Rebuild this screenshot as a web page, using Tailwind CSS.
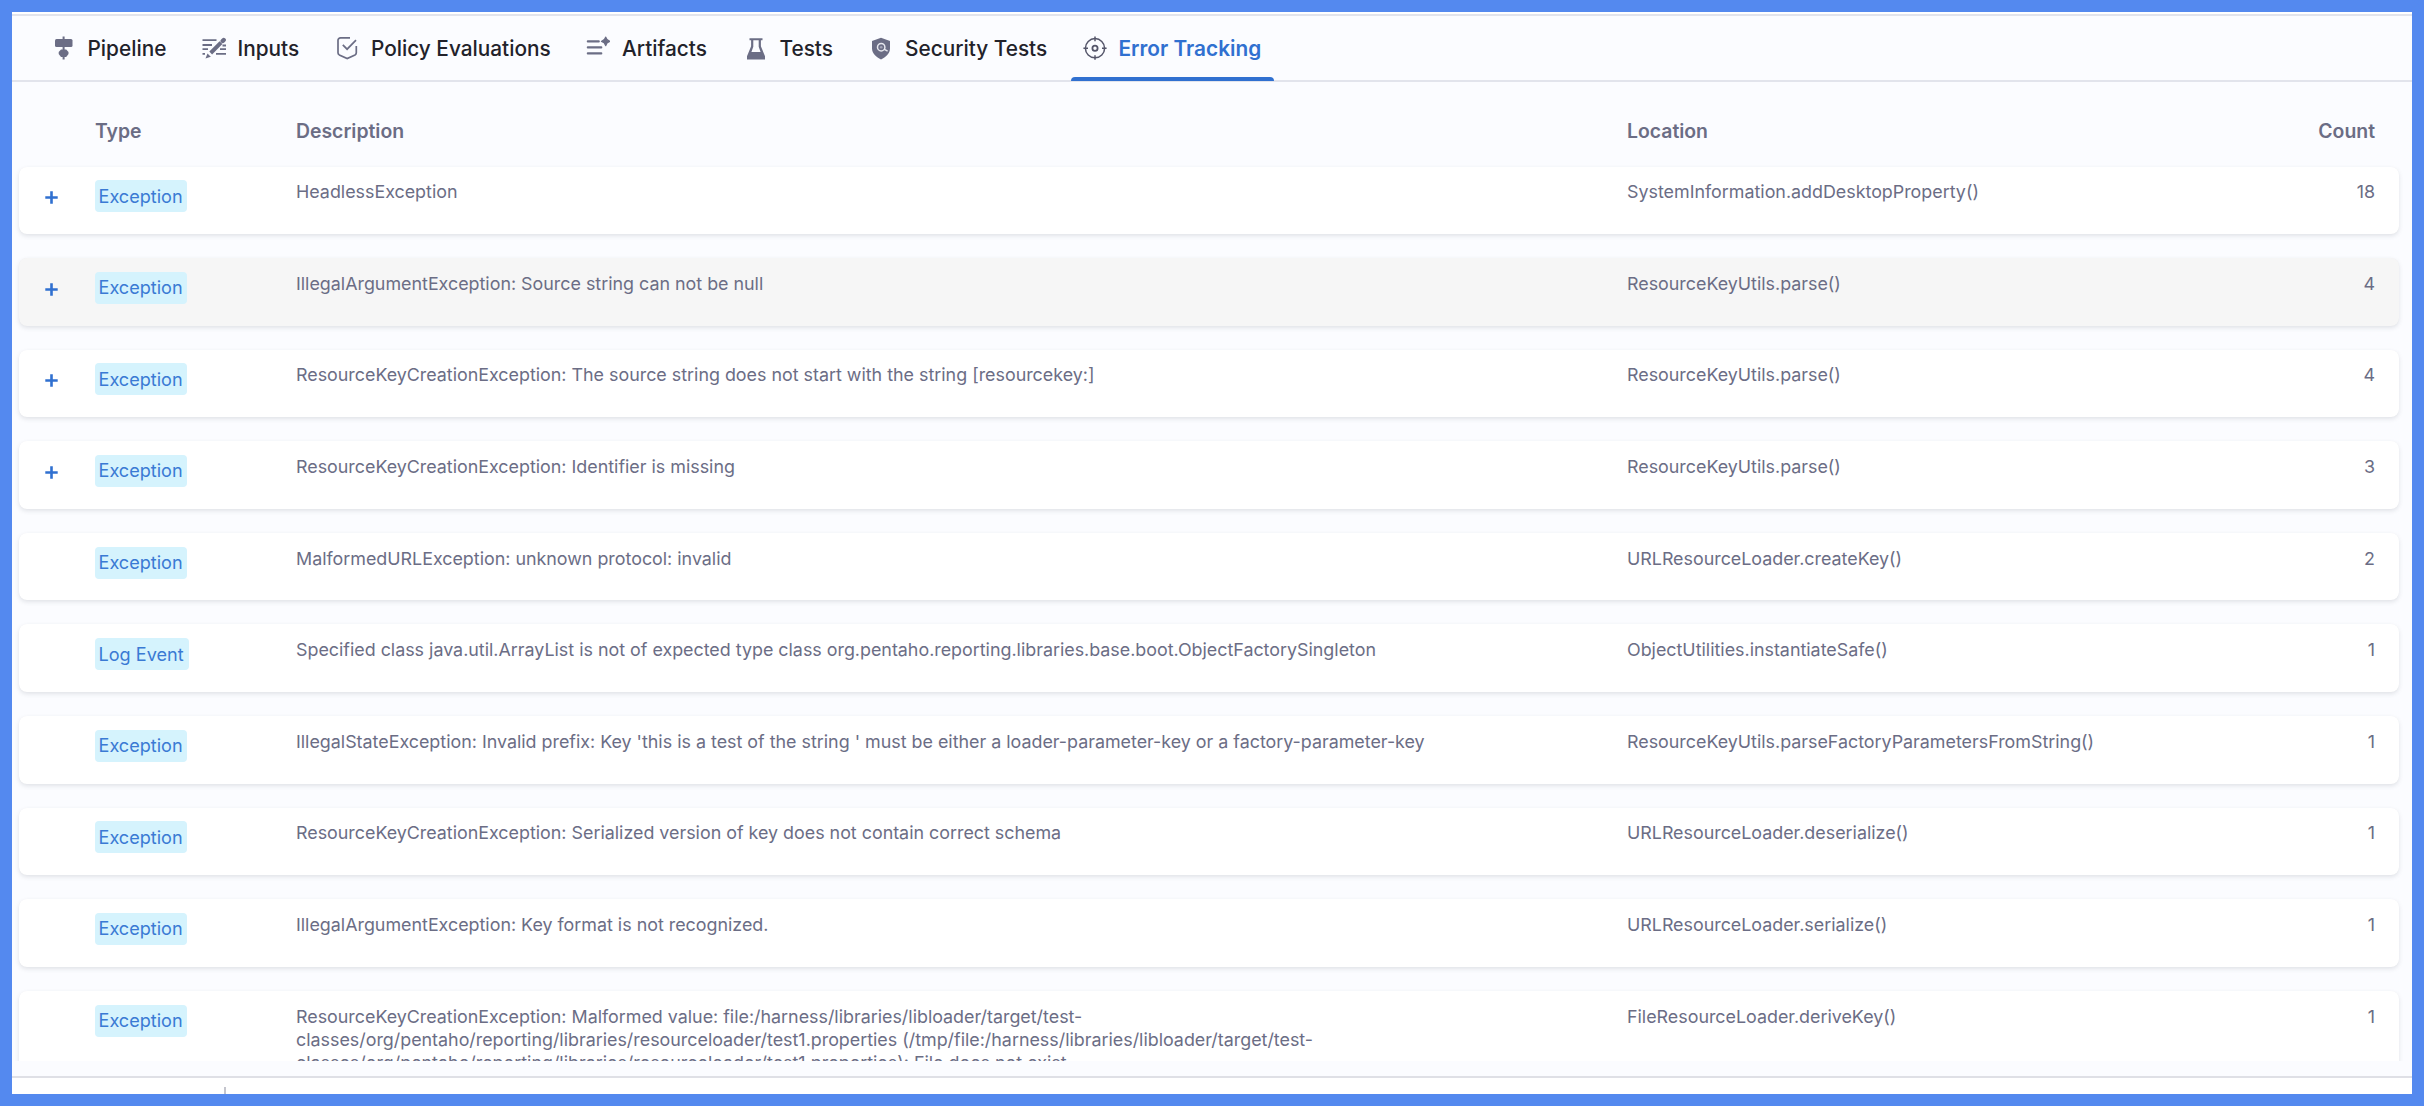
<!DOCTYPE html>
<html lang="en">
<head>
<meta charset="utf-8">
<title>Error Tracking</title>
<script src="https://cdn.jsdelivr.net/npm/@tailwindcss/browser@4"></script>
</head>
<body class="h-[1106px] w-[2424px] overflow-hidden bg-[#5489ef] p-3 font-['Inter',sans-serif]">
<div class="flex h-[1082px] flex-col overflow-hidden bg-[#fbfcff] text-[#6b6d85]">

  <!-- Tabs -->
  <nav class="h-[70px] shrink-0 border-t-2 border-white">
    <div class="grid h-[68px] grid-cols-[150px_133px_251px_158px_125px_213.5px_203.5px] border-y-2 border-[#e2e4ec] pl-[28px] text-[20.8px] font-medium text-[#22222a]">
      <div class="flex items-center gap-[11.5px] pl-3">
        <svg class="size-6 shrink-0 text-[#6b6d85]" viewBox="0 0 24 24" fill="currentColor"><rect x="10.6" y="0.5" width="2" height="23" /><rect x="3" y="3" width="17.5" height="8" rx="1.5"/><path d="M9 13.5h5.200l2.300 2.600v2l-2.300 2.900H9l-2.300-2.900v-2z"/></svg>
        <span class="pt-px">Pipeline</span>
      </div>
      <div class="flex items-center gap-[11.5px] pl-3">
        <svg class="size-6 shrink-0 text-[#6b6d85]" viewBox="0 0 24 24" fill="none" stroke="currentColor" stroke-width="1.800"><path d="M0.500 4.200h14M0.500 9h9.500M0.500 13.200h5.500M0.500 17.800h2.500M20.500 9.500h3.500M18 13.200h6M14 17.800h10"/><path d="M8.700 17L19 6.700" stroke-width="4"/><path d="M20.700 5l1-1" stroke-width="4.400" stroke-linecap="round"/><path d="M3.500 22.500l2-5 3.300 3.200z" fill="currentColor" stroke="none"/></svg>
        <span class="pt-px">Inputs</span>
      </div>
      <div class="flex items-center gap-[12px] pl-3">
        <svg class="size-6 shrink-0 text-[#6b6d85]" viewBox="0 0 24 24" fill="none" stroke="currentColor" stroke-width="1.700"><path d="M15 1.800H5.500a2.500 2.500 0 0 0-2.500 2.500v12.400c0 1 .5 1.700 1.300 2.200l7.900 3.700 7.800-3.700c.9-.5 1.300-1.200 1.300-2.200V10"/><path d="M7.800 8.800l4.300 4.400L21 4.200"/></svg>
        <span class="pt-px">Policy Evaluations</span>
      </div>
      <div class="flex items-center gap-[12px] pl-3">
        <svg class="size-6 shrink-0 text-[#6b6d85]" viewBox="0 0 24 24" fill="none" stroke="currentColor" stroke-width="2.100" stroke-linecap="round"><path d="M1.800 5.400h11M1.800 11.400h13.500M1.800 17.400h13.500"/><path d="M19.700 1.200q.8 3.400 4.200 4.200-3.400.8-4.200 4.200-.8-3.400-4.200-4.200 3.400-.8 4.200-4.200z" fill="currentColor" stroke-width="1.300" stroke-linejoin="round"/></svg>
        <span class="pt-px">Artifacts</span>
      </div>
      <div class="flex items-center gap-[11.5px] pl-3">
        <svg class="size-6 shrink-0 text-[#6b6d85]" viewBox="0 0 24 24" fill="currentColor"><path fill-rule="evenodd" d="M5.500 2.200h13v2.100h-1.600v6l4.100 9.900v3.400H3v-3.400l4.100-9.900v-6H5.500zM9.300 4.300v6.500L7.400 16h9.200l-1.900-5.200V4.300z"/></svg>
        <span class="pt-px">Tests</span>
      </div>
      <div class="flex items-center gap-[12px] pl-3">
        <svg class="size-6 shrink-0 text-[#6b6d85]" viewBox="0 0 24 24"><path fill="currentColor" d="M12 1.800l9 3.200v7.500c0 5-4.300 8.700-9 11-4.700-2.300-9-6-9-11V5z"/><circle cx="12.200" cy="11.200" r="3.700" fill="none" stroke="#e6e7ee" stroke-width="1.500"/><circle cx="12.200" cy="11.200" r="1.300" fill="#a0a1b3"/><path d="M15 13.200l3.600 2" stroke="#e6e7ee" stroke-width="1.500"/></svg>
        <span class="pt-px">Security Tests</span>
      </div>
      <div class="relative flex items-center gap-[12px] pl-3 font-semibold text-[#3070d0]">
        <svg class="size-6 shrink-0 text-[#55566a]" viewBox="0 0 24 24" fill="none" stroke="currentColor" stroke-width="1.500"><circle cx="12" cy="12.200" r="9.600"/><circle cx="12" cy="12.200" r="2.600" stroke-width="1.800"/><path d="M12 .6v4.600M12 19.200v4.600M.4 12.200H5M19 12.200h4.600"/></svg>
        <span class="pt-px">Error Tracking</span>
        <div class="absolute inset-x-0 -bottom-[1px] h-1 rounded-t-sm bg-[#3070d0]"></div>
      </div>
    </div>
  </nav>

  <!-- Error list -->
  <main class="h-[979px] shrink-0 overflow-hidden pl-[7px] pr-[13px]">
    <div class="grid h-[84.5px] grid-cols-[76px_201px_1331px_1fr] pr-6 pt-[37px] text-[19.4px] leading-6 font-semibold">
      <span></span><span>Type</span><span>Description</span><span class="flex justify-between"><span>Location</span><span>Count</span></span>
    </div>
    <div id="rows" class="flex flex-col gap-6 text-[17.87px] leading-[23.3px]"></div>
  </main>

  <!-- Footer -->
  <footer class="mt-[15px] flex h-[18px] shrink-0 items-end border-t-2 border-[#dfe0e6] bg-white pl-[212px]">
    <div class="h-[7px] w-[2px] bg-[#c4c5cd]"></div>
  </footer>
</div>

<script>
const events = [
  ['Exception', 'HeadlessException', 'SystemInformation.addDesktopProperty()', 18, true],
  ['Exception', 'IllegalArgumentException: Source string can not be null', 'ResourceKeyUtils.parse()', 4, true],
  ['Exception', 'ResourceKeyCreationException: The source string does not start with the string [resourcekey:]', 'ResourceKeyUtils.parse()', 4, true],
  ['Exception', 'ResourceKeyCreationException: Identifier is missing', 'ResourceKeyUtils.parse()', 3, true],
  ['Exception', 'MalformedURLException: unknown protocol: invalid', 'URLResourceLoader.createKey()', 2, false],
  ['Log Event', 'Specified class java.util.ArrayList is not of expected type class org.pentaho.reporting.libraries.base.boot.ObjectFactorySingleton', 'ObjectUtilities.instantiateSafe()', 1, false],
  ['Exception', "IllegalStateException: Invalid prefix: Key 'this is a test of the string ' must be either a loader-parameter-key or a factory-parameter-key", 'ResourceKeyUtils.parseFactoryParametersFromString()', 1, false],
  ['Exception', 'ResourceKeyCreationException: Serialized version of key does not contain correct schema', 'URLResourceLoader.deserialize()', 1, false],
  ['Exception', 'IllegalArgumentException: Key format is not recognized.', 'URLResourceLoader.serialize()', 1, false],
  ['Exception', 'ResourceKeyCreationException: Malformed value: file:/harness/libraries/libloader/target/test-<br>classes/org/pentaho/reporting/libraries/resourceloader/test1.properties (/tmp/file:/harness/libraries/libloader/target/test-<br>classes/org/pentaho/reporting/libraries/resourceloader/test1.properties): File does not exist', 'FileResourceLoader.deriveKey()', 1, false]
];
const plus = '<svg class="ml-[25.5px] mt-[11px] size-[13px] text-[#3070d0]" viewBox="0 0 13 13" stroke="currentColor" stroke-width="2.600"><path d="M6.500 .3v12.400M.3 6.500h12.400"/></svg>';
document.getElementById('rows').innerHTML = events.map(([type, text, location, count, expandable], i) => `
  <div class="grid ${i === 9 ? 'h-[110px]' : 'h-[67.6px]'} shrink-0 grid-cols-[75.500px_201.500px_1331px_1fr] items-start rounded-lg ${i === 1 ? 'bg-[#f6f6f6]' : 'bg-white'} pr-6 pt-[13.800px] shadow-[0_2px_4px_rgba(96,97,112,0.16),0_0_1px_rgba(40,41,61,0.04)]">
    <div>${expandable ? plus : ''}</div>
    <div class="flex"><span class="flex h-8 ${i === 5 ? 'w-[94px]' : 'w-[92.500px]'} items-center rounded-[4px] bg-[#d5f3fd] pl-[4px] text-[18.1px] whitespace-nowrap text-[#3a7ad4]">${type}</span></div>
    <div class="whitespace-nowrap">${text}</div>
    <div class="flex justify-between"><span>${location}</span><span>${count}</span></div>
  </div>`).join('');
</script>
</body>
</html>
